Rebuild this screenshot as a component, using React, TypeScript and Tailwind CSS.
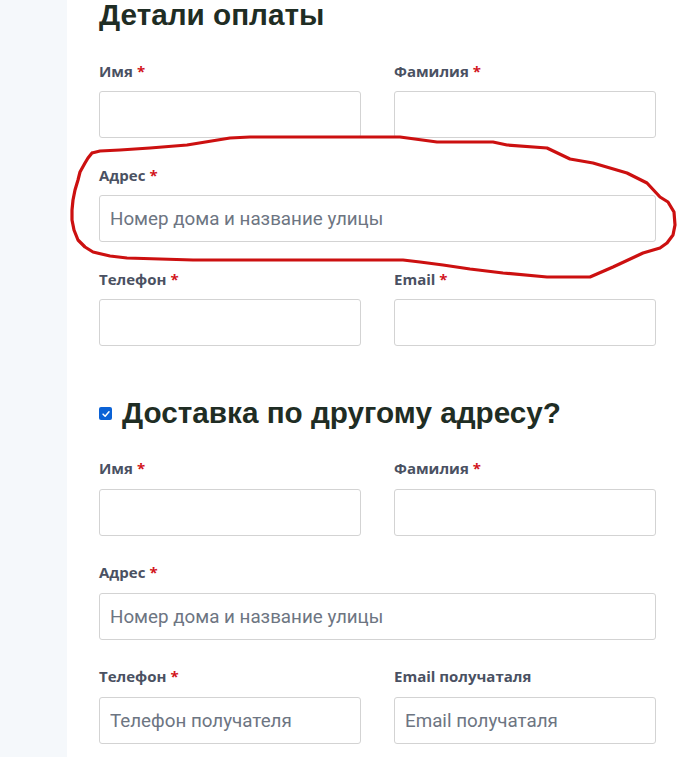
//----------->Checkout billing form (screenshot with hand-drawn mark)<-----------
import React from "react";

type fieldProps = {
  label: string;
  required?: boolean;
  placeholder?: string;
  wide?: boolean;
  gap?: string;
};

//------->Hand-drawn red loop around the address field<---------
const loopPoints = [
  [92, 153], [88, 158], [85, 163], [80, 172], [78, 180], [75, 190], [73, 200],
  [72, 210], [72, 220], [74, 230], [78, 240], [85, 247], [93, 252], [110, 256],
  [127, 258], [160, 259], [193, 260], [280, 260], [380, 260], [403, 260],
  [420, 262], [443, 265], [470, 269], [503, 273], [547, 277], [590, 277],
  [613, 267], [643, 253], [660, 248], [667, 243], [673, 235], [675, 225],
  [674, 212], [668, 202], [660, 197], [647, 183], [627, 173], [593, 163],
  [570, 159], [547, 148], [507, 145], [493, 142], [437, 142], [400, 137],
  [360, 137], [300, 137], [250, 137], [230, 138], [187, 145], [150, 148],
  [120, 150], [100, 151], [92, 153],
]
  .map((p) => p.join(","))
  .join(" ");

const Field = ({ label, required, placeholder, wide, gap }: fieldProps) => {
  return (
    <div className={wide ? "col-span-2 flex flex-col" : "flex flex-col"}>
      <label
        className={
          "font-['Open_Sans',sans-serif] text-[15px] leading-5 font-bold text-[#4a5162] " +
          (gap === "wide" ? "mb-[11px]" : "mb-[10px]")
        }
      >
        {label}
        {required && <span className="text-[#d2151d] ml-1">*</span>}
      </label>
      <input
        type="text"
        placeholder={placeholder}
        className="h-[47px] w-full border border-[#d3d3d3] rounded-[3px] px-[10px] bg-white font-['Roboto',sans-serif] text-[18.8px] text-[#333] placeholder:text-[#6d7582] outline-none"
      />
    </div>
  );
};

const App = () => {
  return (
    <div className="relative flex min-h-[757px] w-[677px] overflow-hidden">
      <div className="w-[67px] shrink-0 bg-[#f5f8fb]" />
      <div className="flex-1 bg-white pl-8">
        <h2 className="font-['Liberation_Sans',Arial,sans-serif] text-[29.7px] leading-[30px] font-bold text-[#1f2d24]">
          Детали оплаты
        </h2>
        <div className="mt-[31px] grid w-[557px] grid-cols-2 gap-x-[33px] gap-y-[27px]">
          <Field label="Имя" required />
          <Field label="Фамилия" required />
          <Field label="Адрес" required wide placeholder="Номер дома и название улицы" />
          <Field label="Телефон" required />
          <Field label="Email" required />
        </div>

        <div className="mt-[52px] flex items-center">
          <span className="mr-[10px] mt-[1px] flex h-[13px] w-[13px] items-center justify-center rounded-[2px] bg-[#0b62d6]">
            <svg viewBox="0 0 12 12" className="h-[10px] w-[10px]">
              <path d="M2.5 6.2 L5 8.6 L9.6 3.4" fill="none" stroke="white" strokeWidth="1.8" strokeLinecap="round" strokeLinejoin="round" />
            </svg>
          </span>
          <h2 className="font-['Liberation_Sans',Arial,sans-serif] text-[29.7px] leading-[30px] font-bold text-[#1f2d24]">
            Доставка по другому адресу?
          </h2>
        </div>
        <div className="mt-[30px] grid w-[557px] grid-cols-2 gap-x-[33px] gap-y-[26px]">
          <Field label="Имя" required gap="wide" />
          <Field label="Фамилия" required gap="wide" />
          <Field label="Адрес" required wide gap="wide" placeholder="Номер дома и название улицы" />
          <Field label="Телефон" required gap="wide" placeholder="Телефон получателя" />
          <Field label="Email получаталя" gap="wide" placeholder="Email получаталя" />
        </div>
      </div>

      <svg className="pointer-events-none absolute left-0 top-0 h-[757px] w-[677px]" viewBox="0 0 677 757">
        <polyline
          points={loopPoints}
          fill="none"
          stroke="#cc1010"
          strokeWidth="3.2"
          strokeLinejoin="round"
          strokeLinecap="round"
        />
      </svg>
    </div>
  );
};

export default App;
